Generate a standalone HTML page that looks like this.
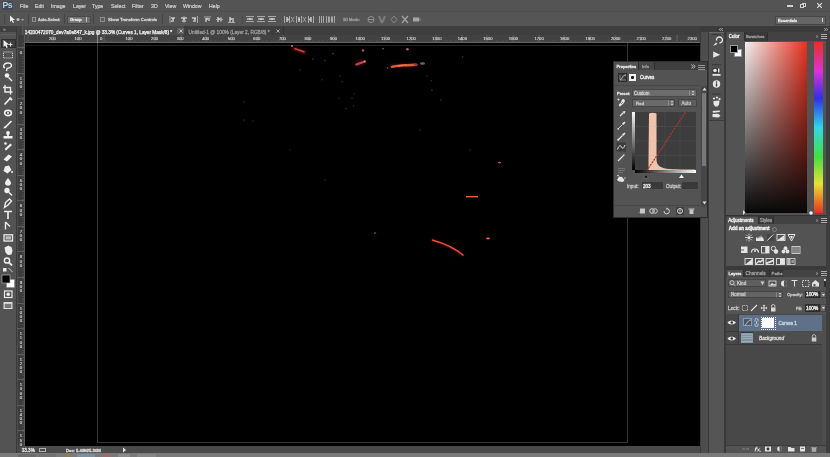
<!DOCTYPE html>
<html><head><meta charset="utf-8">
<style>
*{margin:0;padding:0;box-sizing:border-box}
html,body{width:830px;height:457px;overflow:hidden;background:#535353;font-family:"Liberation Sans",sans-serif;color:#d6d6d6}
.a{position:absolute}
.t{position:absolute;font-size:5.6px;line-height:7px;white-space:nowrap;color:#d4d4d4;-webkit-text-stroke:0.3px currentColor}
.m{position:absolute;top:2.8px;font-size:5.2px;line-height:7px;white-space:nowrap;color:#d0d0d0;-webkit-text-stroke:0.2px currentColor}
.rl{position:absolute;font-size:4.2px;line-height:5px;color:#d4d4d4;white-space:nowrap;-webkit-text-stroke:0.15px currentColor}
.vl{position:absolute;font-size:4.2px;line-height:4.2px;color:#d4d4d4;width:5px;text-align:center;-webkit-text-stroke:0.15px currentColor}
svg{position:absolute;overflow:visible}
#w{position:absolute;left:0;top:0;width:830px;height:457px;overflow:hidden;will-change:transform}
</style></head><body><div id="w">

<!-- ===== MENU BAR ===== -->
<div class="a" style="left:0;top:0;width:830px;height:11px;background:#545454"></div>
<div class="a" style="left:2px;top:1px;width:11px;height:9px;background:#414956;border-radius:1px"></div>
<div class="a" style="left:2.5px;top:0px;font:bold 8.6px/10px 'Liberation Sans',sans-serif;color:#b4cde8;letter-spacing:-0.6px">Ps</div>
<div class="m" style="left:20px">File</div>
<div class="m" style="left:35px">Edit</div>
<div class="m" style="left:51px">Image</div>
<div class="m" style="left:73px">Layer</div>
<div class="m" style="left:92px">Type</div>
<div class="m" style="left:111px">Select</div>
<div class="m" style="left:132px">Filter</div>
<div class="m" style="left:151px">3D</div>
<div class="m" style="left:165px">View</div>
<div class="m" style="left:183px">Window</div>
<div class="m" style="left:209px">Help</div>
<!-- window controls -->
<div class="a" style="left:787px;top:5px;width:6px;height:1.5px;background:#d0d0d0"></div>
<div class="a" style="left:801.5px;top:2.5px;width:4.5px;height:4.5px;border:1px solid #d0d0d0"></div>
<div class="a" style="left:799.5px;top:4px;width:4.5px;height:4px;border:1px solid #d0d0d0;background:#545454"></div>
<svg style="left:815.5px;top:2px" width="7" height="7"><path d="M1.2 1.2L5.8 5.8M5.8 1.2L1.2 5.8" stroke="#dcdcdc" stroke-width="1.2"/></svg>

<!-- ===== OPTIONS BAR ===== -->
<div class="a" style="left:0;top:11px;width:830px;height:1px;background:#4e4e4e"></div>
<div class="a" style="left:0;top:12px;width:830px;height:14px;background:#555555"></div>
<svg style="left:8px;top:15px" width="16" height="9"><path d="M2 0.5L2 7L3.6 5.4L5 8L6 7.5L4.8 5L7 5Z" fill="#eee"/><circle cx="10" cy="4.5" r="1.6" fill="#bbb"/><path d="M13 4L16 4L14.5 6Z" fill="#aaa"/></svg>
<div class="a" style="left:28px;top:14px;width:1px;height:10px;background:#444"></div>
<div class="a" style="left:4px;top:14px;width:1px;height:10px;background:#474747"></div>
<div class="a" style="left:31.5px;top:17px;width:4.5px;height:4.5px;border:1px solid #8e8e8e;background:#5a5a5a"></div>
<div class="t" style="left:38px;top:16px;font-size:4.1px">Auto-Select:</div>
<div class="a" style="left:64px;top:14px;width:1px;height:10px;background:#444"></div>
<div class="a" style="left:67px;top:15.5px;width:24px;height:8px;background:#6e6e6e;border:1px solid #4a4a4a"></div>
<div class="t" style="left:70px;top:16px;font-size:4.2px;color:#e8e8e8">Group</div>
<div class="a" style="left:86px;top:17px;width:1px;height:5px;background:#bbb"></div>
<div class="a" style="left:93px;top:14px;width:1px;height:10px;background:#444"></div>
<div class="a" style="left:100px;top:17px;width:4.5px;height:4.5px;border:1px solid #8e8e8e;background:#5a5a5a"></div>
<div class="t" style="left:108px;top:16px;font-size:4.35px">Show Transform Controls</div>
<div class="a" style="left:162px;top:14px;width:1px;height:10px;background:#444"></div>
<!-- align icons -->
<svg style="left:168px;top:15px" width="175" height="9">
<g fill="#a8a8a8">
<rect x="1.5" y="1" width="1" height="7"/><rect x="3" y="2" width="4" height="2"/><rect x="3" y="5" width="3" height="2"/>
<rect x="15.5" y="1" width="1" height="7"/><rect x="13" y="2" width="6" height="2"/><rect x="14" y="5" width="4" height="2"/>
<rect x="24" y="2" width="4" height="2"/><rect x="25" y="5" width="3" height="2"/><rect x="29" y="1" width="1" height="7"/>
<rect x="36" y="1.5" width="7" height="1"/><rect x="37" y="3" width="2" height="4"/><rect x="40" y="3" width="2" height="3"/>
<rect x="48" y="4" width="7" height="1"/><rect x="49" y="2" width="2" height="5"/><rect x="52" y="2.5" width="2" height="4"/>
<rect x="60" y="7" width="7" height="1"/><rect x="61" y="2" width="2" height="5"/><rect x="64" y="3" width="2" height="4"/>
</g>
<g fill="#d8d8d8"><circle cx="5" cy="4" r="1"/><circle cx="16" cy="4" r="1"/><circle cx="27" cy="4" r="1"/><circle cx="39" cy="4" r="1"/><circle cx="51" cy="4" r="1"/><circle cx="63" cy="4" r="1"/></g>
<rect x="74" y="0" width="1" height="9" fill="#474747"/>
<g fill="#a8a8a8">
<rect x="78" y="1" width="8" height="1"/><rect x="79" y="3" width="6" height="2"/><rect x="78" y="6" width="8" height="1"/>
<rect x="89" y="1" width="8" height="1"/><rect x="90" y="3" width="6" height="2"/><rect x="89" y="6" width="8" height="1"/>
<rect x="100" y="1" width="8" height="1"/><rect x="101" y="3" width="6" height="2"/><rect x="100" y="6" width="8" height="1"/>
<rect x="116" y="1" width="1" height="7"/><rect x="118" y="2" width="2" height="5"/><rect x="121" y="1" width="1" height="7"/><path d="M123 2L126 7M126 2L123 7" stroke="#a0a0a0" stroke-width="0.9"/>
<rect x="128" y="1" width="1" height="7"/><rect x="130" y="2" width="2" height="5"/><rect x="133" y="1" width="1" height="7"/><path d="M135 2L138 7M138 2L135 7" stroke="#a0a0a0" stroke-width="0.9"/>
<rect x="140" y="1" width="1" height="7"/><rect x="142" y="2" width="2" height="5"/><rect x="145" y="1" width="1" height="7"/>
<rect x="151" y="1" width="1" height="7"/><rect x="153" y="1" width="1" height="7"/><rect x="155" y="1" width="1" height="7"/>
<rect x="158" y="1" width="1" height="7"/><rect x="160" y="1.5" width="2" height="6"/><rect x="163" y="1.5" width="2" height="6"/><rect x="166" y="1" width="1" height="7"/>
</g>
<g fill="#d0d0d0"><circle cx="82" cy="4" r="1"/><circle cx="93" cy="4" r="1"/><circle cx="104" cy="4" r="1"/><circle cx="120" cy="4.5" r="1"/><circle cx="131" cy="4.5" r="1"/><circle cx="142" cy="4.5" r="1"/></g>
</svg>
<div class="t" style="left:343px;top:16px;font-size:3.9px;color:#9a9a9a">3D Mode:</div>
<svg style="left:367px;top:15px" width="60" height="9" fill="none" stroke="#a8a8a8" stroke-width="1" opacity="0.7">
<circle cx="4" cy="4.5" r="3"/><path d="M1 4.5L7 4.5" />
<path d="M12 1L15 8M18 1L15 8" stroke="#8d8d8d" stroke-width="2"/>
<path d="M27 1L30 4.5L27 8L24 4.5Z" stroke="#9a9a9a"/>
<path d="M35 1L41 8M41 1L35 8" stroke="#c8c8c8" stroke-width="1.2"/>
<rect x="46" y="2.5" width="6" height="4" fill="#c8c8c8" stroke="none"/><path d="M53 3L53 6" />
</svg>
<!-- essentials -->
<div class="a" style="left:775px;top:16px;width:51px;height:9px;background:#666;border:1px solid #474747"></div>
<div class="t" style="left:778px;top:17px;font-size:4.2px;color:#e6e6e6">Essentials</div>
<div class="a" style="left:822px;top:18px;width:1px;height:4px;background:#ccc"></div>

<!-- ===== DARK BAND / TOOLBAR ===== -->
<div class="a" style="left:0;top:26px;width:830px;height:6px;background:#3b3b3b"></div>
<div class="a" style="left:0;top:26px;width:17px;height:427px;background:#535353"></div>
<div class="a" style="left:0;top:26px;width:17px;height:6px;background:#3f3f3f"></div>
<div class="a" style="left:3px;top:27px;font-size:5px;line-height:5px;color:#bbb">»</div>
<div class="a" style="left:16px;top:26px;width:1px;height:427px;background:#3a3a3a"></div>
<!-- toolbar icons -->
<div class="a" style="left:1px;top:33.5px;width:15px;height:1px;background:#5e5e5e"></div>
<div class="a" style="left:1px;top:39px;width:15px;height:9px;background:#3c3c3c;border:1px solid #2e2e2e"></div>
<svg style="left:0;top:0" width="17" height="320">
<g fill="#f0f0f0" stroke="none">
<path d="M3.5 40L3.5 47L5.2 45.4L6.5 48L7.8 47.4L6.6 44.8L9 44.6Z"/>
<path d="M10.5 42.5V46.5M8.5 44.5H12.5" stroke="#d8d8d8" stroke-width="1.2"/>
</g>
<g fill="none" stroke="#c8c8c8" stroke-width="1" stroke-dasharray="1.2 0.8">
<rect x="3.5" y="52" width="9" height="6"/>
</g>
<g fill="none" stroke="#ececec" stroke-width="1.4">
<path d="M5 68C2.5 66.5 3.5 63 8 63C12 63 12.5 66 10 67.5C9 68.2 7.5 68 7 68.5L6.5 71"/>
<path d="M8.5 77.5L12 81"/>
<path d="M5 85V92H12.5M3 87.5H10.5V94.5"/>
<path d="M4.5 104.5L10 98.5" stroke-width="1.8"/><path d="M9.5 97.5L12 100" stroke-width="2"/>
<ellipse cx="8" cy="113" rx="3.4" ry="2.6" stroke-width="1.6"/>
<path d="M4.5 128L11.5 121" stroke-width="1.7"/>
</g>
<g fill="#f0f0f0" stroke="none">
<circle cx="7" cy="75.5" r="2.3"/>
<circle cx="8" cy="113" r="1"/>
<path d="M3 128.5L5 126L6.5 127.5Z"/>
<circle cx="8" cy="133" r="1.9"/><rect x="7.2" y="134" width="1.6" height="2"/><rect x="3.5" y="136" width="9" height="2.5"/>
<path d="M4.5 149L10.5 143.5L12 145L6 150.5Z"/><circle cx="5.5" cy="143.5" r="1.3"/>
<path d="M3.5 159.5L8.5 154.5L12 156.5L7 161.5Z"/>
<path d="M5 166.5L9 165.5L11.5 170L7.5 173.5L3.5 171Z"/><circle cx="12" cy="172" r="1"/>
<path d="M8 178C9.8 180.3 11 182 11 183.3C11 184.8 9.6 185.8 8 185.8C6.4 185.8 5 184.8 5 183.3C5 182 6.2 180.3 8 178Z"/>
<circle cx="7" cy="190.5" r="2.7"/>
</g>
<g fill="none" stroke="#ececec" stroke-width="1.4">
<path d="M9 192.5L12 195.5" stroke-width="1.6"/>
<path d="M4.5 207.5L5.5 202.5L9.5 199L11.5 201L8 205Z" stroke-width="1.4"/>
<path d="M4 211.5H12M8 211.5V219" stroke-width="1.7"/>
<path d="M5.5 222V229.5M5.5 222L10 226.5" stroke-width="1.4"/>
<rect x="4" y="234.8" width="8.5" height="6.2" stroke-width="1.3"/><rect x="5.5" y="236.3" width="5.5" height="3.2" fill="#bdbdbd" stroke="none"/>
<circle cx="7" cy="260.5" r="2.6" stroke-width="1.5"/><path d="M9 262.5L12 265.5" stroke-width="1.8"/>
<rect x="4.5" y="291" width="7.5" height="6.5" stroke-width="1.2"/>
</g>
<g fill="#ececec">
<path d="M4.5 247.5L5.5 252.5L8 255L11.5 254.5L12.5 250.5L11.5 247L10 246.5L8.5 245.5L6.5 246.5Z"/>
<circle cx="8.2" cy="294.2" r="1.8"/>
<rect x="3" y="268" width="3.5" height="3.5"/><path d="M8.5 268L12.5 272" stroke="#d0d0d0" stroke-width="1"/>
<rect x="3.5" y="302" width="9" height="7" fill="#e0e0e0"/><rect x="4.7" y="303.8" width="6.6" height="4.2" fill="#777"/>
</g>
<rect x="6.5" y="279.5" width="8" height="8" fill="#fff" stroke="#888" stroke-width="0.5"/>
<rect x="2" y="275" width="8" height="8" fill="#000" stroke="#b0b0b0" stroke-width="0.7"/>
</svg>
<!-- ===== TAB BAR ===== -->
<div class="a" style="left:17px;top:26px;width:683px;height:9px;background:#3e3e3e"></div>
<div class="a" style="left:17px;top:26px;width:5px;height:17px;background:#444"></div>
<div class="a" style="left:22px;top:26px;width:162px;height:9px;background:#4b4b4b;border-left:1px solid #5a5a5a"></div>
<div class="t" style="left:24.8px;top:28.8px;font-size:4.7px;color:#f0f0f0;-webkit-text-stroke:0.25px currentColor">14200472070_dev7a0e847_k.jpg @ 33.3% (Curves 1, Layer Mask/8) *</div>
<div class="a" style="left:177px;top:27.5px;width:6.5px;height:6px;background:#5e5e5e"></div>
<svg style="left:178.5px;top:29px" width="4" height="4"><path d="M0.5 0.5L3.5 3.5M3.5 0.5L0.5 3.5" stroke="#e0e0e0" stroke-width="0.8"/></svg>
<div class="t" style="left:188.5px;top:28.8px;font-size:4.8px;color:#9a9a9a">Untitled-1 @ 100% (Layer 2, RGB/8) *</div>
<svg style="left:275.5px;top:29px" width="4" height="4"><path d="M0.5 0.5L3.5 3.5M3.5 0.5L0.5 3.5" stroke="#c8c8c8" stroke-width="0.8"/></svg>

<!-- ===== RULERS ===== -->
<div class="a" style="left:17px;top:35px;width:683px;height:8px;background:#424242;border-bottom:1px solid #6a6a6a"></div>
<div class="a" style="left:25px;top:35px;width:675px;height:8px;background:repeating-linear-gradient(to right,#5e5e5e 0 1px,transparent 1px 25.55px);background-position:-23.4px 0;"></div>
<div class="a" style="left:25px;top:40px;width:675px;height:3px;background:repeating-linear-gradient(to right,#5a5a5a 0 1px,transparent 1px 2.555px);background-position:-2.2px 0;opacity:.5"></div>
<div class="a" style="left:17px;top:35px;width:8px;height:411px;background:#3c3c3c;border-right:1px solid #5a5a5a;border-left:1px solid #4c4c4c"></div>
<div class="a" style="left:17px;top:43px;width:8px;height:403px;background:repeating-linear-gradient(to bottom,#5e5e5e 0 1px,transparent 1px 25.55px);background-position:0 4px;"></div>
<div class="a" style="left:22px;top:43px;width:3px;height:403px;background:repeating-linear-gradient(to bottom,#5a5a5a 0 1px,transparent 1px 2.555px);opacity:.5"></div>

<div class="rl" style="left:48.9px;top:36.3px">200</div>
<div class="rl" style="left:74.5px;top:36.3px">100</div>
<div class="rl" style="left:100.0px;top:36.3px">0</div>
<div class="rl" style="left:125.5px;top:36.3px">100</div>
<div class="rl" style="left:151.1px;top:36.3px">200</div>
<div class="rl" style="left:176.7px;top:36.3px">300</div>
<div class="rl" style="left:202.2px;top:36.3px">400</div>
<div class="rl" style="left:227.8px;top:36.3px">500</div>
<div class="rl" style="left:253.3px;top:36.3px">600</div>
<div class="rl" style="left:278.9px;top:36.3px">700</div>
<div class="rl" style="left:304.4px;top:36.3px">800</div>
<div class="rl" style="left:330.0px;top:36.3px">900</div>
<div class="rl" style="left:355.5px;top:36.3px">1000</div>
<div class="rl" style="left:381.1px;top:36.3px">1100</div>
<div class="rl" style="left:406.6px;top:36.3px">1200</div>
<div class="rl" style="left:432.2px;top:36.3px">1300</div>
<div class="rl" style="left:457.7px;top:36.3px">1400</div>
<div class="rl" style="left:483.2px;top:36.3px">1500</div>
<div class="rl" style="left:508.8px;top:36.3px">1600</div>
<div class="rl" style="left:534.4px;top:36.3px">1700</div>
<div class="rl" style="left:559.9px;top:36.3px">1800</div>
<div class="rl" style="left:585.5px;top:36.3px">1900</div>
<div class="rl" style="left:611.0px;top:36.3px">2000</div>
<div class="rl" style="left:636.6px;top:36.3px">2100</div>
<div class="rl" style="left:662.1px;top:36.3px">2200</div>
<div class="rl" style="left:687.6px;top:36.3px">2300</div>
<div class="vl" style="left:18.3px;top:51.0px">0</div>
<div class="vl" style="left:18.3px;top:76.5px">1<br>0<br>0</div>
<div class="vl" style="left:18.3px;top:102.1px">2<br>0<br>0</div>
<div class="vl" style="left:18.3px;top:127.7px">3<br>0<br>0</div>
<div class="vl" style="left:18.3px;top:153.2px">4<br>0<br>0</div>
<div class="vl" style="left:18.3px;top:178.7px">5<br>0<br>0</div>
<div class="vl" style="left:18.3px;top:204.3px">6<br>0<br>0</div>
<div class="vl" style="left:18.3px;top:229.8px">7<br>0<br>0</div>
<div class="vl" style="left:18.3px;top:255.4px">8<br>0<br>0</div>
<div class="vl" style="left:18.3px;top:281.0px">9<br>0<br>0</div>
<div class="vl" style="left:18.3px;top:306.5px">1<br>0<br>0<br>0</div>
<div class="vl" style="left:18.3px;top:332.1px">1<br>1<br>0<br>0</div>
<div class="vl" style="left:18.3px;top:357.6px">1<br>2<br>0<br>0</div>
<div class="vl" style="left:18.3px;top:383.2px">1<br>3<br>0<br>0</div>
<div class="vl" style="left:18.3px;top:408.7px">1<br>4<br>0<br>0</div>
<div class="vl" style="left:18.3px;top:434.3px">1<br>5<br>0<br>0</div>
<div class="a" style="left:97px;top:35px;width:1px;height:8px;background:#8a8a8a"></div>
<div class="a" style="left:283px;top:26px;width:1px;height:9px;background:#333"></div>
<!-- ===== CANVAS ===== -->
<div class="a" style="left:25px;top:43px;width:675px;height:403px;background:#000"></div>
<div class="a" style="left:25px;top:45px;width:675px;height:1px;background:#161616"></div>
<div class="a" style="left:97px;top:43px;width:531px;height:400px;border:1px solid #363636;border-top:none"></div>
<div class="a" style="left:98px;top:45px;width:529px;height:1px;background:#262626"></div>

<svg style="left:25px;top:43px" width="675" height="403">
<defs><filter id="b1" x="-50%" y="-50%" width="200%" height="200%"><feGaussianBlur stdDeviation="0.6"/></filter>
<filter id="b2" x="-50%" y="-50%" width="200%" height="200%"><feGaussianBlur stdDeviation="1.2"/></filter></defs>
<g transform="translate(-25,-43)">
<g filter="url(#b2)" opacity="0.55">
<path d="M292 48L306 53" stroke="#7a1010" stroke-width="4"/>
<ellipse cx="361" cy="62.5" rx="6" ry="3" fill="#601018"/>
<path d="M390 66L416 65" stroke="#601810" stroke-width="4"/>
<path d="M431 239.5C445 244 455 249 464 256" stroke="#601010" stroke-width="3" fill="none"/>
</g>
<g filter="url(#b1)">
<path d="M294.5 48.5L304.5 52" stroke="#c84848" stroke-width="1.8"/>
<path d="M356.5 64.5L364.5 61.5" stroke="#c84050" stroke-width="2.4" stroke-linecap="round"/><circle cx="364.8" cy="61.5" r="1.1" fill="#d08080"/>
<path d="M392 66.8C397 65.5 403 65.5 408 65.2C411 65 413 65 416 64.8" stroke="#e05a38" stroke-width="2.4" stroke-linecap="round"/><path d="M398 66C401 65 404 65 407 65" stroke="#f07050" stroke-width="1.4"/><path d="M414 64.8L418 64.6" stroke="#7a3060" stroke-width="1.2"/><ellipse cx="422.5" cy="63.5" rx="2.5" ry="1.2" fill="#7a6068"/><circle cx="387.5" cy="68" r="0.8" fill="#886060"/>
<circle cx="363" cy="50.4" r="1.2" fill="#b06070"/>
<circle cx="407.4" cy="49.3" r="1.3" fill="#b06070"/>
<circle cx="383" cy="48.8" r="0.8" fill="#777"/>
<circle cx="292" cy="46" r="0.9" fill="#999"/>
<path d="M466 196.7H478" stroke="#e05a40" stroke-width="1.5"/>
<path d="M432 240C445 243.5 455 248 463.5 255.5" stroke="#e84a3a" stroke-width="1.4" fill="none"/>
<ellipse cx="488" cy="238.5" rx="2" ry="1" fill="#e06040"/>
<circle cx="375" cy="233" r="0.8" fill="#c07080"/>
<ellipse cx="499.5" cy="162.6" rx="1.6" ry="0.9" fill="#d05040"/>
<circle cx="333" cy="53.6" r="0.8" fill="#525252"/><circle cx="313" cy="58.9" r="0.8" fill="#333333"/><circle cx="325" cy="60.6" r="0.8" fill="#333333"/><circle cx="321.8" cy="79.8" r="0.8" fill="#2c2c2c"/><circle cx="340" cy="76" r="0.8" fill="#2c2c2c"/><circle cx="342" cy="81.6" r="0.8" fill="#2c2c2c"/><circle cx="339" cy="98" r="0.8" fill="#282828"/><circle cx="346" cy="108.7" r="0.8" fill="#2c2c2c"/><circle cx="244" cy="101.7" r="0.8" fill="#282828"/><circle cx="252.7" cy="121" r="0.8" fill="#282828"/><circle cx="462.8" cy="57" r="0.8" fill="#3d3d3d"/><circle cx="427" cy="76" r="0.8" fill="#2c2c2c"/><circle cx="431.3" cy="80.7" r="0.8" fill="#2c2c2c"/><circle cx="441" cy="100" r="0.8" fill="#333333"/><circle cx="354.4" cy="93.8" r="0.8" fill="#282828"/><circle cx="353.5" cy="106" r="0.8" fill="#282828"/><circle cx="300" cy="70" r="0.8" fill="#222222"/><circle cx="420" cy="130" r="0.8" fill="#222222"/><circle cx="470" cy="150" r="0.8" fill="#222222"/><circle cx="290" cy="150" r="0.8" fill="#1e1e1e"/><circle cx="432" cy="90" r="0.6" fill="#666"/>
<circle cx="352" cy="98" r="0.6" fill="#555"/>
<circle cx="325" cy="180" r="0.6" fill="#555"/>
<circle cx="244" cy="120" r="0.6" fill="#555"/>
</g>
</g>
</svg>


<!-- ===== STATUS BAR ===== -->
<div class="a" style="left:17px;top:446px;width:683px;height:7px;background:#4a4a4a"></div>
<div class="t" style="left:21.7px;top:446.5px;font-size:4.6px;color:#e0e0e0">33.3%</div>
<div class="a" style="left:39px;top:447.5px;width:7px;height:4px;border:1px solid #b0b0b0"></div>
<div class="t" style="left:66px;top:446.5px;font-size:4.28px;color:#e0e0e0">Doc: 5.49M/5.30M</div>
<svg style="left:121.5px;top:447px" width="5" height="6"><path d="M1 0.5L4 3L1 5.5Z" fill="#e6e6e6"/></svg>

<!-- ===== BOTTOM STRIP ===== -->
<div class="a" style="left:0;top:453px;width:830px;height:4px;background:#7a7a7a"></div>
<div class="a" style="left:18px;top:453.5px;width:18px;height:3.5px;background:#6c6c6c"></div>
<div class="a" style="left:37.5px;top:453.5px;width:18px;height:3.5px;background:#717171"></div>
<div class="a" style="left:65px;top:454px;width:6px;height:3px;background:#8c7a5a"></div>
<div class="a" style="left:77px;top:454px;width:18px;height:3px;background:#7890a0"></div>
<div class="a" style="left:103px;top:454px;width:7px;height:3px;background:#a06a6a"></div>
<div class="a" style="left:118px;top:454px;width:12px;height:3px;background:#8a8a8a"></div>
<div class="a" style="left:137px;top:454px;width:19px;height:3px;background:#868686"></div>

<!-- ===== RIGHT DOCK ===== -->
<div class="a" style="left:700px;top:32px;width:8px;height:421px;background:#4d4d4d"></div>
<div class="a" style="left:700px;top:32px;width:1px;height:421px;background:#3a3a3a"></div>
<div class="a" style="left:708px;top:32px;width:1px;height:421px;background:#3a3a3a"></div>
<div class="a" style="left:709px;top:32px;width:15px;height:421px;background:#555"></div>
<div class="a" style="left:724px;top:32px;width:2px;height:421px;background:#3a3a3a"></div>

<div class="a" style="left:709px;top:32px;width:15px;height:88px;background:#505050;border-top:1px solid #6a6a6a"></div>

<div class="a" style="left:709px;top:120px;width:15px;height:1px;background:#3c3c3c"></div>
<svg style="left:709px;top:34px" width="15" height="88" fill="#e6e6e6">
<rect x="3" y="0" width="9" height="1.2" fill="#3c3c3c"/>
<path d="M7.5 6.5A3 3 0 1 1 10.5 9" fill="none" stroke="#e6e6e6" stroke-width="1.3"/><path d="M4 12L7 8.5L8.5 10Z"/>
<path d="M4.2 17.5L11.2 20.7L4.2 23.8Z"/>
<rect x="3" y="30" width="9" height="1.2" fill="#3c3c3c"/>
<rect x="3.5" y="34" width="8" height="5" fill="#3a3a3a"/><circle cx="6" cy="36.5" r="1.8"/><rect x="9" y="34.5" width="1.5" height="4"/><rect x="3.5" y="40" width="8" height="1.8"/>
<circle cx="7.5" cy="50" r="3.7"/><rect x="6.8" y="47.3" width="1.4" height="1.4" fill="#3c3c3c"/><rect x="6.8" y="49.3" width="1.4" height="3.2" fill="#3c3c3c"/>
<rect x="3" y="59.5" width="9" height="1.2" fill="#3c3c3c"/>
<circle cx="5" cy="64.5" r="1.1"/><circle cx="8" cy="63.5" r="1.1"/><circle cx="10.5" cy="65" r="1.1"/><path d="M4.5 67L10.5 66.5L10 70.5L8.5 72.5L6 72.5L4.5 70Z"/>
<path d="M3.5 77L10.5 76.5L11 78L4 78.7Z"/><path d="M3.5 80L9 79.7L11.5 81.5L9.5 83.5L3.5 83Z"/>
</svg>


<!-- color panel -->
<div class="a" style="left:726px;top:32px;width:104px;height:183px;background:#535353"></div>
<div class="a" style="left:726px;top:31.5px;width:104px;height:9px;background:#424242"></div>
<div class="a" style="left:744px;top:31.5px;width:23.5px;height:9px;background:#383838;border-left:1px solid #2e2e2e;border-right:1px solid #2e2e2e"></div>
<div class="a" style="left:726.5px;top:31.5px;width:17.5px;height:9px;background:#535353"></div>
<div class="t" style="left:728.7px;top:33px;font-size:4.5px;color:#ececec">Color</div>
<div class="t" style="left:745.7px;top:33px;font-size:4.35px;color:#9c9c9c">Swatches</div>
<div class="a" style="left:745px;top:42px;width:62px;height:171px;background:linear-gradient(to bottom,rgba(0,0,0,0),#080808),linear-gradient(to right,#f4f0f0,#e8301e)"></div>
<div class="a" style="left:814px;top:42px;width:9px;height:171px;background:linear-gradient(to bottom,#e8301e 0%,#e030d8 17%,#3030e8 33%,#30d8e8 50%,#40e040 67%,#e8e030 83%,#e8301e 100%)"></div>
<div class="a" style="left:734px;top:49px;width:8px;height:8px;background:#fff;border:1px solid #999"></div>
<div class="a" style="left:730px;top:45px;width:8px;height:8px;background:#000;border:1px solid #999"></div>


<!-- adjustments panel -->
<div class="a" style="left:726px;top:215px;width:104px;height:1px;background:#333"></div>
<div class="a" style="left:726px;top:216px;width:104px;height:8px;background:#424242"></div>
<div class="a" style="left:757.5px;top:216px;width:16.5px;height:8px;background:#383838;border-left:1px solid #2e2e2e;border-right:1px solid #2e2e2e"></div>
<div class="a" style="left:727px;top:216.5px;width:30.5px;height:7.5px;background:#535353"></div>
<div class="t" style="left:728.3px;top:217px;font-size:4.6px;color:#ececec">Adjustments</div>
<div class="t" style="left:759.8px;top:217px;font-size:4.5px;color:#9c9c9c">Styles</div>
<div class="t" style="left:728.7px;top:225.3px;font-size:4.55px;color:#f2f2f2;font-weight:bold">Add an adjustment</div>
<svg style="left:771.5px;top:226.5px" width="5" height="5"><circle cx="2.5" cy="2.5" r="2" fill="none" stroke="#9a9a9a" stroke-width="0.6"/></svg>

<svg style="left:740px;top:233px" width="62" height="32" fill="#e4e4e4">
<g stroke="#e4e4e4" stroke-width="0.8"><path d="M9 0.5V2.5M9 6.5V8.5M5 4.5H7M11 4.5H13M6.2 1.7L7.5 3M10.5 6L11.8 7.3M11.8 1.7L10.5 3M7.5 6L6.2 7.3"/></g><circle cx="9" cy="4.5" r="1.6"/>
<path d="M16 8V5L17 4L18 6L19 3L20 5.5L21 2L22 5L23 4L24 8Z"/>
<rect x="27" y="1" width="7" height="7" fill="#444"/><path d="M27.5 7.5L33.5 1.5" stroke="#e4e4e4" stroke-width="0.9"/><path d="M27.5 7.5C29 4 31 4 33.5 1.5" stroke="#bbb" stroke-width="0.6" fill="none"/>
<rect x="37" y="1.5" width="8" height="6" fill="none" stroke="#e4e4e4" stroke-width="0.9"/><path d="M37.5 7L44.5 2L44.5 7Z"/>
<path d="M48 1.5H55L51.5 8Z" fill="none" stroke="#e4e4e4" stroke-width="1"/><path d="M50 3H53L51.5 6Z"/>
<rect x="1" y="13.5" width="6.5" height="6.5"/><rect x="1" y="16.5" width="3" height="1" fill="#666"/>
<path d="M11.5 19.5A3.5 3.5 0 0 1 18.5 19.5" fill="none" stroke="#e4e4e4" stroke-width="1.2"/><circle cx="15" cy="18" r="1"/>
<rect x="21.5" y="13.5" width="7.5" height="6.5" fill="none" stroke="#e4e4e4" stroke-width="0.9"/><rect x="25.2" y="13.5" width="3.8" height="6.5"/>
<circle cx="33.5" cy="15.5" r="2.2" fill="none" stroke="#e4e4e4" stroke-width="0.9"/><circle cx="36" cy="18.5" r="2.2"/>
<circle cx="45.5" cy="15.2" r="1.9"/><circle cx="43.5" cy="18.5" r="1.9"/><circle cx="47.5" cy="18.5" r="1.9"/>
<rect x="52" y="13.5" width="8" height="7" fill="none" stroke="#e4e4e4" stroke-width="0.8"/><path d="M54 14V20M56 14V20M58 14V20" stroke="#e4e4e4" stroke-width="0.7"/>
<rect x="5" y="25.5" width="7.5" height="6" fill="none" stroke="#e4e4e4" stroke-width="0.9"/><path d="M6 31L12 26V31Z"/>
<rect x="15.5" y="25.5" width="8" height="6" fill="none" stroke="#e4e4e4" stroke-width="0.9"/><path d="M16 30L19 27L20 28L23 26V28L20 30L19 29L16 31.5Z"/>
<rect x="26" y="25.5" width="7.5" height="6" fill="none" stroke="#e4e4e4" stroke-width="0.9"/><path d="M26 29.5L33.5 26.5V28.5L26 31.5Z"/>
<rect x="36.5" y="25.5" width="8" height="6" fill="none" stroke="#e4e4e4" stroke-width="0.9"/><rect x="40" y="26" width="4.5" height="5"/>
<rect x="47" y="25.5" width="8" height="6" fill="none" stroke="#cfcfcf" stroke-width="0.9"/><rect x="47.5" y="26" width="3" height="5" fill="#bbb"/><rect x="51.5" y="27" width="2.5" height="3" fill="#999"/>
</svg>


<!-- layers panel -->
<div class="a" style="left:726px;top:266px;width:104px;height:4px;background:#3a3a3a"></div>
<div class="a" style="left:726px;top:269.5px;width:104px;height:7.5px;background:#424242"></div>
<div class="a" style="left:743.4px;top:269.5px;width:40px;height:7.5px;background:#383838;border-left:1px solid #2e2e2e;border-right:1px solid #2e2e2e"></div>
<div class="a" style="left:768.5px;top:269.5px;width:1px;height:7px;background:#2e2e2e"></div>
<div class="a" style="left:727px;top:269.5px;width:16.4px;height:7.5px;background:#535353"></div>
<div class="t" style="left:728.6px;top:270px;font-size:4.25px;color:#ececec">Layers</div>
<div class="t" style="left:745.5px;top:270px;font-size:4.8px;color:#9c9c9c">Channels</div>
<div class="t" style="left:771.6px;top:270px;font-size:4.3px;color:#9c9c9c">Paths</div>

<!-- filter row -->
<div class="a" style="left:728px;top:279px;width:38px;height:8px;background:#5f5f5f;border:1px solid #454545"></div>
<svg style="left:729px;top:280px" width="7" height="6"><circle cx="3" cy="2.7" r="2" fill="none" stroke="#ddd" stroke-width="0.8"/><path d="M4.5 4.2L6.3 5.8" stroke="#ddd" stroke-width="0.8"/></svg>
<div class="t" style="left:737px;top:280px;font-size:4.6px;color:#c4c4c4">Kind</div>
<svg style="left:760px;top:280.5px" width="5" height="5"><path d="M0.5 0.5H4.5L2.5 4Z" fill="#ccc"/></svg>
<svg style="left:768px;top:279px" width="62" height="9" fill="#e0e0e0">
<rect x="1" y="2" width="7" height="5" fill="none" stroke="#e0e0e0" stroke-width="0.8"/><path d="M1.5 6.5L4 4L6 5.5L7.5 4.5V6.5Z"/>
<circle cx="16" cy="4.5" r="3"/><path d="M16 1.5A3 3 0 0 1 16 7.5Z" fill="#555"/>
<path d="M23.5 1.5H29.5M26.5 1.5V7.5" stroke="#e0e0e0" stroke-width="1"/>
<rect x="34.5" y="1.5" width="6.5" height="6" fill="none" stroke="#e0e0e0" stroke-width="0.9" stroke-dasharray="1.5 1"/>
<path d="M44 7.5V4L47.5 1L51 4V7.5Z"/><rect x="45.5" y="5" width="2" height="2.5" fill="#555"/>
</svg>
<div class="a" style="left:824px;top:279px;width:3px;height:8px;background:#2e2e2e;border-top:2px solid #ccc"></div>
<!-- blend row -->
<div class="a" style="left:728px;top:290.5px;width:55px;height:7.5px;background:#646464;border:1px solid #454545"></div>
<div class="t" style="left:731px;top:291px;font-size:4.5px;color:#c4c4c4">Normal</div>
<svg style="left:776px;top:291.5px" width="6" height="6"><path d="M0.5 0.5V5.5" stroke="#999" stroke-width="0.6"/><path d="M2.5 2.3L4 0.8L5.5 2.3ZM2.5 3.7L4 5.2L5.5 3.7Z" fill="#ddd"/></svg>
<div class="t" style="left:787px;top:291px;font-size:4.3px;color:#c8c8c8">Opacity:</div>
<div class="a" style="left:805px;top:290.5px;width:14.5px;height:7.5px;background:#2c2c2c"></div>
<div class="t" style="left:806px;top:291px;font-size:4.8px;color:#f4f4f4">100%</div>
<div class="a" style="left:820px;top:290.5px;width:6px;height:7.5px;background:#6a6a6a;border:1px solid #454545"></div>
<svg style="left:821.5px;top:292.5px" width="4" height="4"><path d="M0 1L1.5 3L3 1Z" fill="#ddd"/></svg>
<!-- lock row -->
<div class="t" style="left:728px;top:305px;font-size:4.8px;color:#c8c8c8">Lock:</div>
<svg style="left:741px;top:304px" width="40" height="8" fill="#d8d8d8">
<rect x="1.5" y="1.5" width="5" height="5" fill="none" stroke="#cfcfcf" stroke-width="0.8" stroke-dasharray="1 0.7"/>
<path d="M10 7L16 1" stroke="#e0e0e0" stroke-width="1.1"/>
<path d="M23 0.5L24.5 2H23.5V3.5H25V2.5L26.5 4L25 5.5V4.5H23.5V6H24.5L23 7.5L21.5 6H22.5V4.5H21V5.5L19.5 4L21 2.5V3.5H22.5V2H21.5Z"/>
<path d="M30.5 3.5V2.2A1.7 1.7 0 0 1 33.9 2.2V3.5" fill="none" stroke="#e0e0e0" stroke-width="0.8"/><rect x="30" y="3.5" width="4.5" height="4"/>
</svg>
<div class="t" style="left:796px;top:305px;font-size:4px;color:#c8c8c8">Fill:</div>
<div class="a" style="left:805px;top:304px;width:14.5px;height:7.5px;background:#2c2c2c"></div>
<div class="t" style="left:806px;top:304.5px;font-size:4.8px;color:#f4f4f4">100%</div>
<div class="a" style="left:820px;top:304px;width:6px;height:7.5px;background:#6a6a6a;border:1px solid #454545"></div>
<svg style="left:821.5px;top:306px" width="4" height="4"><path d="M0 1L1.5 3L3 1Z" fill="#ddd"/></svg>
<div class="a" style="left:726px;top:313.5px;width:100px;height:1px;background:#3a3a3a"></div>
<!-- layer list -->
<div class="a" style="left:726px;top:314px;width:96px;height:131px;background:#484848"></div>
<div class="a" style="left:738px;top:314.5px;width:85px;height:16px;background:#5e7188"></div>
<div class="a" style="left:726px;top:330.5px;width:97px;height:1px;background:#3a3a3a"></div>
<div class="a" style="left:738px;top:331px;width:85px;height:13px;background:#4e4e4e"></div>
<div class="a" style="left:726px;top:344px;width:97px;height:1px;background:#3a3a3a"></div>
<div class="a" style="left:737.5px;top:314px;width:1px;height:31px;background:#3a3a3a"></div>
<svg style="left:727px;top:319px" width="10" height="24">
<path d="M0.5 3.5C2 1 7 1 9 3.5C7 6 2 6 0.5 3.5Z" fill="#e8e8e8"/><circle cx="4.8" cy="3.5" r="1.2" fill="#333"/>
<path d="M0.5 19.5C2 17 7 17 9 19.5C7 22 2 22 0.5 19.5Z" fill="#e8e8e8"/><circle cx="4.8" cy="19.5" r="1.2" fill="#333"/>
</svg>
<div class="a" style="left:743px;top:318px;width:9px;height:8px;background:#4a5666;border:1px solid #8a9aac"></div>
<svg style="left:744px;top:319px" width="8" height="7"><path d="M1 6C3 6 3 1 7 1" fill="none" stroke="#ddd" stroke-width="0.8"/></svg>
<svg style="left:753.5px;top:318px" width="5" height="9"><path d="M1 3.5V2A1.5 1.5 0 0 1 4 2V3.5M1 5.5V7A1.5 1.5 0 0 0 4 7V5.5M2.5 3V6" fill="none" stroke="#cfd6de" stroke-width="0.8"/></svg>
<div class="a" style="left:760.5px;top:316.5px;width:15px;height:13px;border:1px dotted #e8eef4"></div>
<div class="a" style="left:762px;top:318px;width:12px;height:10px;background:#fafafa"></div>
<div class="t" style="left:778.5px;top:319.5px;font-size:4.6px;color:#c8d4e0">Curves 1</div>
<div class="a" style="left:740.5px;top:331.5px;width:12.5px;height:12px;background:#8a9cac;border-top:1.5px solid #2a3848;border-bottom:1px solid #3a4a40"></div>
<div class="a" style="left:741.5px;top:333.5px;width:10.5px;height:8.5px;background:repeating-linear-gradient(to bottom,#9aaab8 0 1px,#7d909f 1px 2.2px)"></div>
<div class="t" style="left:759px;top:335px;font-size:4.7px;color:#dadada;font-style:italic">Background</div>
<svg style="left:811px;top:334px" width="6" height="8"><path d="M1.3 3.5V2.3A1.7 1.7 0 0 1 4.7 2.3V3.5" fill="none" stroke="#ccc" stroke-width="0.8"/><rect x="0.8" y="3.5" width="4.5" height="4" fill="#ccc"/></svg>
<!-- layers scrollbar area -->
<div class="a" style="left:822px;top:314px;width:4px;height:131px;background:#4e4e4e"></div>
<div class="a" style="left:826px;top:32px;width:4px;height:421px;background:#3e3e3e"></div>
<!-- bottom icons -->
<div class="a" style="left:726px;top:445px;width:100px;height:8px;background:#535353;border-top:1px solid #3a3a3a"></div>
<svg style="left:740px;top:446px" width="80" height="6" fill="#e2e2e2">
<path d="M2 3H5M6 3H9" stroke="#888" stroke-width="1.2"/>
<path d="M15 5.5L16.2 1.2H17.5M14.8 2.8H16.8M17.5 2.5L19.5 5.5M19.5 2.5L17.3 5.5" fill="none" stroke="#ececec" stroke-width="0.9"/><circle cx="20.5" cy="5.2" r="0.5" fill="#ccc"/>
<rect x="25" y="0.5" width="6" height="5"/><circle cx="28" cy="3" r="1.4" fill="#333"/>
<circle cx="39.5" cy="3" r="2.4"/><path d="M39.5 0.6A2.4 2.4 0 0 1 39.5 5.4Z" fill="#555"/>
<path d="M48 1H50.5L51.5 2H54.5V5.5H48Z"/>
<rect x="60" y="0.5" width="5" height="5"/><rect x="61" y="2" width="3" height="1" fill="#777"/>
<path d="M71 1.5H77M72 2H76V5.5H72Z" fill="#aaa" stroke="#aaa" stroke-width="0.6"/>
</svg>
<!-- properties panel -->
<div class="a" style="left:613px;top:61px;width:95px;height:157px;background:#535353;border:1px solid #2e2e2e"></div>
<div class="a" style="left:614px;top:62px;width:93px;height:7.5px;background:#3e3e3e"></div>
<div class="a" style="left:614px;top:62px;width:24px;height:7.5px;background:#535353"></div>
<div class="a" style="left:638px;top:62px;width:1px;height:7.5px;background:#2e2e2e"></div>
<div class="a" style="left:639px;top:62px;width:15.5px;height:7.5px;background:#474747;border-right:1px solid #2e2e2e"></div>
<div class="t" style="left:616.5px;top:63px;font-size:4.3px;color:#ececec">Properties</div>
<div class="t" style="left:642px;top:63px;font-size:4.2px;color:#9a9a9a">Info</div>
<svg style="left:690.5px;top:64px" width="5" height="5"><path d="M0.5 0.5L2 2.5L0.5 4.5M2.5 0.5L4 2.5L2.5 4.5" fill="none" stroke="#e0e0e0" stroke-width="0.8"/></svg>
<svg style="left:698px;top:64.5px" width="8" height="5"><path d="M0 0.5H7M0 2.5H7M0 4.5H7" stroke="#bbb" stroke-width="0.7"/></svg>
<div class="a" style="left:617.5px;top:73px;width:9.5px;height:8.5px;background:#3a3a3a;border:1px solid #2a2a2a"></div>
<svg style="left:618.5px;top:74px" width="8" height="7"><path d="M1 6C3 6 3 1 7 1" fill="none" stroke="#ddd" stroke-width="0.9"/><path d="M1 1V6H7" fill="none" stroke="#aaa" stroke-width="0.6"/></svg>
<div class="a" style="left:628.5px;top:74px;width:7.5px;height:6.5px;background:#f0f0f0"></div>
<div class="a" style="left:631px;top:76px;width:2.5px;height:2.5px;border-radius:50%;background:#111"></div>
<div class="t" style="left:640px;top:74px;font-size:4.5px;color:#f0f0f0">Curves</div>
<div class="a" style="left:614px;top:84.5px;width:86px;height:1px;background:#474747"></div>
<div class="t" style="left:617px;top:89.5px;font-size:4.1px;color:#e6e6e6">Preset:</div>
<div class="a" style="left:631.5px;top:88.5px;width:65px;height:8px;background:#6c6c6c;border:1px solid #484848"></div>
<div class="t" style="left:634px;top:89.5px;font-size:4.5px;color:#c8c8c8">Custom</div>
<svg style="left:689px;top:89.5px" width="6" height="6"><path d="M0.5 0.5V5.5" stroke="#aaa" stroke-width="0.6"/><path d="M2.5 2.3L4 0.8L5.5 2.3ZM2.5 3.7L4 5.2L5.5 3.7Z" fill="#ddd"/></svg>
<svg style="left:617px;top:98px" width="9" height="9"><path d="M1.5 7L4 4.5L5 1.5L7 1L8 3L6.5 5.5L3 8.5Z" fill="#e8e8e8"/><circle cx="1.5" cy="1.5" r="1" fill="#ddd"/><path d="M4 6L6 4" stroke="#555" stroke-width="0.7"/></svg>
<div class="a" style="left:632px;top:99px;width:43px;height:8px;background:#6a6a6a;border:1px solid #454545"></div>
<div class="t" style="left:636px;top:100px;font-size:4.3px;color:#c8c8c8">Red</div>
<svg style="left:668px;top:100px" width="6" height="6"><path d="M0.5 0.5V5.5" stroke="#aaa" stroke-width="0.6"/><path d="M2.5 2.3L4 0.8L5.5 2.3ZM2.5 3.7L4 5.2L5.5 3.7Z" fill="#ddd"/></svg>
<div class="a" style="left:678px;top:99px;width:18.5px;height:8px;background:#5e5e5e;border:1px solid #454545"></div>
<div class="t" style="left:681.5px;top:100px;font-size:4.6px;color:#bcbcbc">Auto</div>
<!-- scrollbar -->
<div class="a" style="left:701px;top:86px;width:5.5px;height:121px;background:#464646"></div>
<svg style="left:701.5px;top:87px" width="5" height="4"><path d="M0.5 3.5L2.5 0.5L4.5 3.5Z" fill="#ddd"/></svg>
<div class="a" style="left:701.5px;top:92.5px;width:4.5px;height:73px;background:#787878"></div>
<svg style="left:701.5px;top:201px" width="5" height="4"><path d="M0.5 0.5L2.5 3.5L4.5 0.5Z" fill="#ddd"/></svg>
<!-- tools -->
<svg style="left:616px;top:109px" width="11" height="75" fill="#e4e4e4">
<path d="M4 7L7.5 3.5" stroke="#e4e4e4" stroke-width="1.3"/><path d="M6.5 2.5L9.5 2L8.5 5Z"/>
<path d="M2 20L6.5 15.5" stroke="#d8d8d8" stroke-width="0.9"/><path d="M6 14.5L8.5 12.5L9.5 13.5L7.5 16Z"/><circle cx="2.2" cy="19.8" r="0.9"/>
<path d="M2 31L6.5 26.5" stroke="#e4e4e4" stroke-width="1.2"/><path d="M6 25.5L8.5 23.5L9.5 24.5L7.5 27Z"/><circle cx="2.2" cy="30.8" r="1"/>
<rect x="0.5" y="33.5" width="9.5" height="9" fill="#3c3c3c"/>
<path d="M1.5 40.5C3 36 4.5 36 5.5 38C6.5 40 7.5 40 9 36" fill="none" stroke="#e4e4e4" stroke-width="1"/>
<path d="M2 52L7 47" stroke="#e0e0e0" stroke-width="1.3"/><path d="M6.5 46L8.5 45L8 47.5Z"/>
<path d="M2 59.5H9M2 61.5H9M2 63.5H7" stroke="#8a8a8a" stroke-width="0.6"/>
<path d="M1 71L3 67.5L6 68L8.5 71L7 73L3 72.5Z"/><circle cx="2" cy="66.5" r="0.8"/><circle cx="9" cy="69" r="0.7"/>
</svg>
<!-- graph -->
<div class="a" style="left:632px;top:112px;width:3px;height:58px;background:linear-gradient(to bottom,#fafafa,#000)"></div>
<div class="a" style="left:635px;top:112px;width:60.5px;height:58px;background:#3d3d3d"></div>
<svg style="left:635px;top:112px" width="61" height="58">
<g stroke="#4f4f4f" stroke-width="0.6"><path d="M15 0V58M30 0V58M45 0V58M0 14.5H61M0 29H61M0 43.5H61"/></g>
<path d="M14 1.5Q17.5 0 21.5 1.5V47C21.5 52 23.5 54.5 29 56.3C36 57.5 45 57.6 60 57.6V58H13.5V49Z" fill="#f0c3ac"/>
<g stroke="#e8b49a" stroke-width="0.5"><path d="M14 14.5H22M14 29H22M14 43.5H22"/></g>
<path d="M11.5 59C22 44 30 31 40 16C44 10 47 5 50.5 0.5" fill="none" stroke="#a83a34" stroke-width="1.3" stroke-dasharray="2.2 0.9" opacity="0.9"/>
</svg>
<div class="a" style="left:635px;top:170px;width:60.5px;height:3px;background:linear-gradient(to right,#000,#fafafa)"></div>
<svg style="left:643px;top:173.5px" width="45" height="5"><path d="M0.5 4L3 0.5L5.5 4Z" fill="#111" stroke="#999" stroke-width="0.4"/><path d="M36 4L38.5 0.5L41 4Z" fill="#f4f4f4"/></svg>
<div class="t" style="left:627px;top:182.5px;font-size:4.6px;color:#c4c4c4">Input:</div>
<div class="a" style="left:641.5px;top:182px;width:21.5px;height:6.5px;background:#3a3a3a"></div>
<div class="t" style="left:643px;top:182.5px;font-size:4.6px;color:#f0f0f0">203</div>
<div class="t" style="left:666px;top:182.5px;font-size:4.6px;color:#c4c4c4">Output:</div>
<div class="a" style="left:682px;top:182px;width:15.5px;height:6.5px;background:#3a3a3a"></div>
<!-- bottom icons -->
<div class="a" style="left:614px;top:205px;width:86px;height:1px;background:#474747"></div>
<svg style="left:636px;top:207px" width="64" height="8" fill="#d4d4d4" opacity="0.9">
<path d="M2 6L3.5 4.5V6Z" fill="#999"/><rect x="4" y="1.5" width="5" height="5"/>
<circle cx="16" cy="4" r="2.3" fill="none" stroke="#e2e2e2" stroke-width="1"/><circle cx="19" cy="4" r="2.3" fill="none" stroke="#cfcfcf" stroke-width="1"/>
<path d="M28 4A2.7 2.7 0 1 0 31 1.5" fill="none" stroke="#e2e2e2" stroke-width="1"/><path d="M30 0.5L32 1.8L30.5 3Z"/>
<rect x="40" y="0" width="8" height="8" fill="#3c3c3c"/>
<circle cx="44" cy="4" r="2.5" fill="none" stroke="#e2e2e2" stroke-width="1"/><path d="M44 1.5V6.5" stroke="#e2e2e2" stroke-width="0.8"/>
<rect x="53.5" y="2.5" width="4" height="4.5"/><rect x="52.5" y="1.5" width="6" height="1"/>
</svg>
<!-- header menu icons -->
<svg style="left:816px;top:33.5px" width="12" height="5"><path d="M0 1.5L2 2.5L0 3.5" fill="none" stroke="#bbb" stroke-width="0.6"/><path d="M5 0.5H11M5 2.5H11M5 4.5H11" stroke="#c4c4c4" stroke-width="0.8"/></svg>
<svg style="left:816px;top:217.5px" width="12" height="5"><path d="M0 1.5L2 2.5L0 3.5" fill="none" stroke="#bbb" stroke-width="0.6"/><path d="M5 0.5H11M5 2.5H11M5 4.5H11" stroke="#c4c4c4" stroke-width="0.8"/></svg>
<svg style="left:816px;top:271px" width="12" height="5"><path d="M0 1.5L2 2.5L0 3.5" fill="none" stroke="#bbb" stroke-width="0.6"/><path d="M5 0.5H11M5 2.5H11M5 4.5H11" stroke="#c4c4c4" stroke-width="0.8"/></svg>
<svg style="left:823.5px;top:28.3px" width="5" height="3"><path d="M0.3 0.3L1.8 1.5L0.3 2.7M2.3 0.3L3.8 1.5L2.3 2.7" fill="none" stroke="#d8d8d8" stroke-width="0.7"/></svg>
<svg style="left:719px;top:28.3px" width="5" height="3"><path d="M1.8 0.3L0.3 1.5L1.8 2.7M3.8 0.3L2.3 1.5L3.8 2.7" fill="none" stroke="#d8d8d8" stroke-width="0.7"/></svg>
<svg style="left:742px;top:209px" width="75" height="7"><path d="M1 1L3.5 3.5L1 6Z" fill="#ddd"/><circle cx="69" cy="4" r="1.8" fill="#f4f4f4"/></svg>
</div></body></html>
